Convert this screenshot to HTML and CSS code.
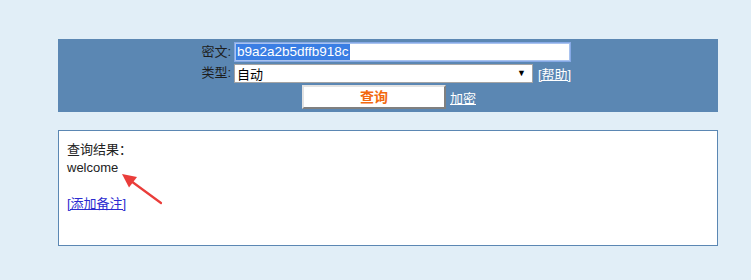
FILE: index.html
```html
<!DOCTYPE html>
<html>
<head>
<meta charset="utf-8">
<link rel="stylesheet" href="styles.css">
</head>
<body>
<div class="wrap">
  <div class="panel">
    <div class="form">
      <div class="label">密文:</div>
      <div class="field">
        <div class="textbox"><span class="sel">b9a2a2b5dffb918c</span></div>
      </div>
      <div class="label">类型:</div>
      <div class="field row">
        <div class="select"><span>自动</span><span class="caret">▼</span></div>
        <a class="help" href="#">[帮助]</a>
      </div>
      <div class="label"></div>
      <div class="field row btnrow">
        <div class="btn">查询</div>
        <a class="enc" href="#">加密</a>
      </div>
    </div>
  </div>
  <div class="result">
    <div class="line">查询结果：</div>
    <div class="line">welcome</div>
    <div class="line">&nbsp;</div>
    <div class="line"><a class="note" href="#">[添加备注]</a></div>
    <svg class="arrow" width="120" height="90" viewBox="0 0 120 90">
      <line x1="102" y1="72" x2="72" y2="50" stroke="#ea3d3a" stroke-width="2.2" stroke-linecap="round"/>
      <polygon points="63,43 78,46 70,56.5" fill="#ea3d3a"/>
    </svg>
  </div>
</div>
</body>
</html>
```
FILE: styles.css
```css
html, body {
  margin: 0;
  padding: 0;
  background: #e1eef7;
  font-family: "Liberation Sans", "Noto Sans CJK SC", sans-serif;
  font-size: 13px;
  color: #222;
}
.wrap {
  padding-top: 39px;
  margin-left: 58px;
  width: 660px;
}
.panel {
  background: #5b87b3;
  height: 73px;
  padding-top: 3px;
  box-sizing: border-box;
}
.form {
  display: grid;
  grid-template-columns: 173px 340px;
  column-gap: 3px;
  row-gap: 1px;
}
.label {
  text-align: right;
  color: #1d1d1d;
  line-height: 20px;
}
.field.row {
  display: flex;
  align-items: center;
}
.textbox {
  width: 337px;
  height: 20px;
  box-sizing: border-box;
  background: #fff;
  border: 1px solid #86a9e6;
  box-shadow: 0 0 0 1px #a9c3ef inset;
  padding: 1px 0 0 1px;
  line-height: 16px;
  font-size: 13.5px;
}
.sel {
  display: inline-block;
  background: #3a7ee4;
  color: #fff;
  padding: 0 1px;
}
.select {
  width: 299px;
  height: 19px;
  box-sizing: border-box;
  background: #fff;
  border: 1px solid #a4a4a4;
  display: flex;
  justify-content: space-between;
  align-items: center;
  padding: 0 6px 0 2px;
  color: #000;
  font-size: 13px;
}
.caret {
  font-size: 9px;
}
.help {
  margin-left: 5px;
  color: #fff;
  text-decoration: underline;
}
.btnrow {
  padding-top: 1px;
}
.btn {
  margin-left: 68px;
  width: 144px;
  height: 24px;
  box-sizing: border-box;
  background: #fff;
  border: 2px solid;
  border-color: #e3e3e3 #808080 #808080 #e3e3e3;
  color: #f26a10;
  font-weight: bold;
  font-size: 14px;
  text-align: center;
  line-height: 20px;
}
.enc {
  margin-left: 4px;
  color: #fff;
  text-decoration: underline;
  font-size: 13px;
}
.result {
  position: relative;
  margin-top: 18px;
  height: 116px;
  box-sizing: border-box;
  background: #fff;
  border: 1px solid #5b87b3;
  padding: 10px 8px 0;
}
.line {
  line-height: 18px;
}
.note {
  color: #2b2bd0;
  text-decoration: underline;
}
.arrow {
  position: absolute;
  left: 0;
  top: 0;
}
```
